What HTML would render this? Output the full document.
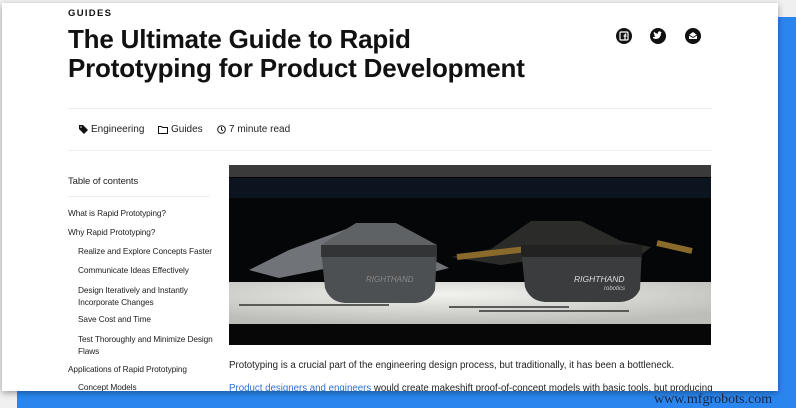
<!DOCTYPE html>
<html><head><meta charset="utf-8"><style>
*{margin:0;padding:0;box-sizing:border-box}
body{width:796px;height:408px;overflow:hidden;background:#f0f0f0;position:relative;font-family:"Liberation Sans",sans-serif;color:#111}
.blue{position:absolute;left:17px;top:17px;width:779px;height:391px;background:#2a86ee}
.card{position:absolute;left:2px;top:3px;width:776px;height:388px;background:#fff;box-shadow:0 2px 6px rgba(0,0,0,.35);overflow:hidden}
.wm{position:absolute;left:654px;top:392px;font-family:"Liberation Serif",serif;font-size:14px;color:#1b2440}
.abs{position:absolute}
.kick{left:66px;top:5px;font-size:9.5px;font-weight:bold;letter-spacing:1.3px}
h1{position:absolute;left:66px;top:22px;font-size:26px;line-height:29px;font-weight:bold;letter-spacing:-0.2px;color:#111}
.hr{position:absolute;left:66px;width:644px;height:1px;background:#eee}
.meta{position:absolute;top:121px;font-size:10px;color:#222}
.toc{position:absolute;font-size:8.3px;color:#222;letter-spacing:-0.1px}
p{position:absolute;left:227px;font-size:9.7px;color:#222;white-space:nowrap}
</style></head><body>
<div class="blue"></div>
<div class="card">
<div class="abs kick">GUIDES</div>
<h1>The Ultimate Guide to Rapid<br>Prototyping for Product Development</h1>
<svg class="abs" style="left:613px;top:24px" width="96" height="18" viewBox="0 0 96 18">
<circle cx="9" cy="9" r="8" fill="#111"/><rect x="5" y="5" width="8" height="8" rx="1" fill="none" stroke="#fff" stroke-width="1.2"/><path d="M10 13V9h1.5M8.5 9h3M10 9V8q0-1 1.3-1" stroke="#fff" stroke-width="1.2" fill="none"/>
<circle cx="43" cy="9" r="8" fill="#111"/><path d="M38 11q3 2 6 0 2-2 2-5l1-1-1 .2q-1-1.5-2.5-.5-1 1-.5 2-2 0-4-2-.8 2 1 3l-1-.2q.3 1.5 1.5 2-1 .7-2.5.5z" fill="#fff"/>
<circle cx="78" cy="9" r="8" fill="#111"/><path d="M74 8l4-3 4 3v4h-8z" fill="#fff"/><path d="M74 8l4 2.5 4-2.5" stroke="#111" stroke-width=".9" fill="none"/>
</svg>
<div class="hr" style="top:105px"></div>
<svg class="abs" style="left:77px;top:122px" width="9" height="9" viewBox="0 0 9 9"><path d="M0 0h4l5 5-4 4-5-5z" fill="#111"/><circle cx="2" cy="2" r=".8" fill="#fff"/></svg>
<div class="meta" style="left:89px">Engineering</div>
<svg class="abs" style="left:156px;top:123px" width="10" height="8" viewBox="0 0 10 8"><path d="M.5.5h3l1 1h5v6h-9z" fill="none" stroke="#111"/></svg>
<div class="meta" style="left:169px">Guides</div>
<svg class="abs" style="left:215px;top:122px" width="9" height="9" viewBox="0 0 9 9"><circle cx="4.5" cy="4.5" r="3.8" fill="none" stroke="#111"/><path d="M4.5 2v2.7l1.6 1" fill="none" stroke="#111"/></svg>
<div class="meta" style="left:227px">7 minute read</div>
<div class="hr" style="top:147px"></div>
<div class="toc" style="left:66px;top:173px;font-size:9.5px">Table of contents</div>
<div class="hr" style="top:193px;width:142px"></div>
<div class="toc" style="left:66px;top:205px">What is Rapid Prototyping?</div>
<div class="toc" style="left:66px;top:224px">Why Rapid Prototyping?</div>
<div class="toc" style="left:76px;top:243px">Realize and Explore Concepts Faster</div>
<div class="toc" style="left:76px;top:262px">Communicate Ideas Effectively</div>
<div class="toc" style="left:76px;top:281px;line-height:12px">Design Iteratively and Instantly<br>Incorporate Changes</div>
<div class="toc" style="left:76px;top:311px">Save Cost and Time</div>
<div class="toc" style="left:76px;top:330px;line-height:12px">Test Thoroughly and Minimize Design<br>Flaws</div>
<div class="toc" style="left:66px;top:361px">Applications of Rapid Prototyping</div>
<div class="toc" style="left:76px;top:379px">Concept Models</div>
<svg class="abs" style="left:227px;top:162px" width="482" height="180" viewBox="0 0 482 180">
<defs><radialGradient id="tb" cx=".45" cy=".3" r=".7"><stop offset="0" stop-color="#f2f2ef"/><stop offset="1" stop-color="#bdbdb9"/></radialGradient></defs>
<rect width="482" height="180" fill="#050608"/>
<rect width="482" height="12" fill="#3a3a3a"/>
<rect y="13" width="482" height="20" fill="#0c1420"/>
<rect y="117" width="482" height="42" fill="url(#tb)"/>
<rect y="159" width="482" height="21" fill="#070707"/>
<path d="M20 105l40-20 60-22 40 5 30 20 30 15-20 5-40-15-60 10-50 10z" fill="#707479"/>
<path d="M92 85h116l-2 40q-5 12-20 13h-70q-15-1-20-15z" fill="#4d5053"/>
<path d="M92 80l35-22h40l41 22z" fill="#5f6265"/>
<rect x="92" y="80" width="116" height="12" fill="#323436"/>
<text x="137" y="117" font-family="Liberation Sans" font-size="8" font-style="italic" fill="#888">RIGHTHAND</text>
<path d="M222 92l40-8 40-28h50l40 20 30 6-10 8-40-10v5l-100 15z" fill="#2b2b29"/>
<path d="M228 92l70-8" stroke="#8a6a2a" stroke-width="6"/>
<path d="M292 84h121l-2 40q-5 12-20 13h-75q-15-1-20-15z" fill="#3a3c3e"/>
<rect x="292" y="80" width="121" height="12" fill="#222"/>
<path d="M428 78l35 8" stroke="#8a6a2a" stroke-width="6"/>
<text x="345" y="117" font-family="Liberation Sans" font-size="8.5" font-style="italic" fill="#ddd">RIGHTHAND</text>
<text x="375" y="125" font-family="Liberation Sans" font-size="6" font-style="italic" fill="#ccc">robotics</text>
<path d="M10 140h150M220 142h120M250 146h150" stroke="#5a5a58" stroke-width="2"/>
</svg>
<p style="top:357px">Prototyping is a crucial part of the engineering design process, but traditionally, it has been a bottleneck.</p>
<p style="top:380px"><span style="color:#2a6fd6">Product designers and engineers</span> would create makeshift proof-of-concept models with basic tools, but producing</p>
</div>
<div class="wm">www.mfgrobots.com</div>
</body></html>
